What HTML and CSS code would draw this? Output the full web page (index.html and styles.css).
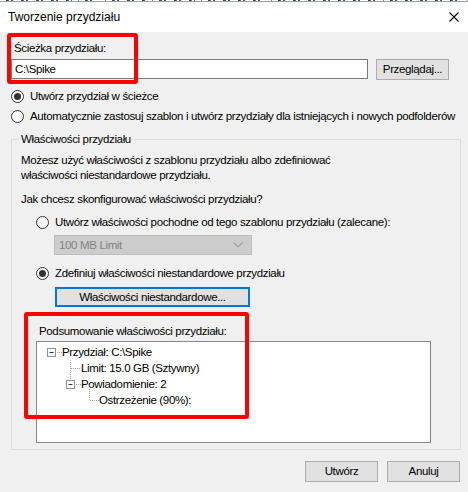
FILE: index.html
```html
<!DOCTYPE html>
<html lang="pl">
<head>
<meta charset="utf-8">
<title>Tworzenie przydziału</title>
<link rel="stylesheet" href="styles.css">
</head>
<body>
<div class="window">
  <div class="strip">
    <span class="c1"></span><span class="c2"></span><span class="c3"></span><span class="c4"></span><span class="c5"></span><span class="c6"></span><span class="c7"></span>
  </div>
  <div class="titlebar">
    <span class="title">Tworzenie przydziału</span>
    <svg class="close" width="10" height="10" viewBox="0 0 10 10"><path d="M0.5 0.5 L9.5 9.5 M9.5 0.5 L0.5 9.5" stroke="#000" stroke-width="1.1" fill="none"/></svg>
  </div>
  <div class="content">
    <div class="label path-label">Ścieżka przydziału:</div>
    <div class="path-row">
      <div class="input">C:\Spike</div>
      <div class="btn browse">Przeglądaj...</div>
    </div>
    <div class="radio-row first"><span class="radio checked"></span><span>Utwórz przydział w ścieżce</span></div>
    <div class="radio-row second"><span class="radio"></span><span>Automatycznie zastosuj szablon i utwórz przydziały dla istniejących i nowych podfolderów</span></div>

    <div class="group">
      <div class="legend">Właściwości przydziału</div>
      <div class="group-body">
        <p class="desc">Możesz użyć właściwości z szablonu przydziału albo zdefiniować<br>właściwości niestandardowe przydziału.</p>
        <p class="question">Jak chcesz skonfigurować właściwości przydziału?</p>
        <div class="radio-row inner r3"><span class="radio"></span><span>Utwórz właściwości pochodne od tego szablonu przydziału (zalecane):</span></div>
        <div class="combo"><span>100 MB Limit</span>
          <svg width="10" height="6" viewBox="0 0 10 6"><path d="M0.5 0.5 L5 5 L9.5 0.5" stroke="#a0a0a0" stroke-width="1.2" fill="none"/></svg>
        </div>
        <div class="radio-row inner r4"><span class="radio checked"></span><span>Zdefiniuj właściwości niestandardowe przydziału</span></div>
        <div class="btn custom">Właściwości niestandardowe...</div>
        <div class="summary-label">Podsumowanie właściwości przydziału:</div>
        <div class="tree">
          <svg class="tree-lines" width="70" height="70" viewBox="0 0 70 70">
            <g stroke="#a0a0a0" stroke-width="1" stroke-dasharray="1 1" fill="none">
              <path d="M20 10.5 H25"/>
              <path d="M33.5 18 V41"/>
              <path d="M34 26.5 H44"/>
              <path d="M39 42.5 H44"/>
              <path d="M52.5 47 V58"/>
              <path d="M53 58.5 H62"/>
            </g>
            <g>
              <rect x="10.5" y="6.5" width="8" height="8" fill="#fff" stroke="#919191"/>
              <path d="M12.5 10.5 H16.5" stroke="#333"/>
              <rect x="29.5" y="38.5" width="8" height="8" fill="#fff" stroke="#919191"/>
              <path d="M31.5 42.5 H35.5" stroke="#333"/>
            </g>
          </svg>
          <div class="node l0">Przydział: C:\Spike</div>
          <div class="node l1">Limit: 15.0 GB (Sztywny)</div>
          <div class="node l1">Powiadomienie: 2</div>
          <div class="node l2">Ostrzeżenie (90%):</div>
        </div>
      </div>
    </div>

    <div class="actions">
      <div class="btn action">Utwórz</div>
      <div class="btn action">Anuluj</div>
    </div>
  </div>
  <div class="mark mark1"></div>
  <div class="mark mark2"></div>
</div>
</body>
</html>
```
FILE: styles.css
```css
html, body {
  margin: 0;
  padding: 0;
}
body {
  width: 468px;
  height: 492px;
  overflow: hidden;
  background: #f0f0f0;
  font-family: "Liberation Sans", Arial, sans-serif;
  font-size: 11.5px;
  letter-spacing: -0.35px;
  color: #000;
}
.window {
  position: relative;
  width: 468px;
  height: 492px;
}
.strip {
  height: 2px;
  overflow: hidden;
  background: #fff;
  border-bottom: 1px solid #a0a0a0;
  display: flex;
  box-sizing: border-box;
}
.strip span {
  display: block;
  height: 1px;
  border-right: 1px solid #888;
  box-sizing: border-box;
  background: repeating-linear-gradient(90deg, transparent 0 6px, #444 6px 8px, #2a6db0 8px 9px, transparent 9px 11px, #555 11px 13px, transparent 13px 15px);
  background-clip: content-box;
  padding: 0 6px 0 4px;
}
.strip .c1 { width: 79px; }
.strip .c2 { width: 27px; }
.strip .c3 { width: 47px; }
.strip .c4 { width: 49px; }
.strip .c5 { width: 70px; }
.strip .c6 { width: 112px; }
.strip .c7 { width: 84px; }
.titlebar {
  height: 30px;
  background: #fff;
  display: flex;
  align-items: center;
  justify-content: space-between;
  padding: 0 9px 0 8px;
  box-sizing: border-box;
}
.title {
  font-size: 12px;
  letter-spacing: 0;
  line-height: 16px;
}
.close {
  display: block;
}
.content {
  padding: 8px 8px 0 11px;
}
.label {
  line-height: 16px;
}
.path-label {
  margin-left: 3px;
}
.path-row {
  display: flex;
  margin-top: 3px;
  gap: 8px;
}
.input {
  width: 357px;
  height: 20px;
  box-sizing: border-box;
  border: 1px solid #7a7a7a;
  background: #fff;
  padding-left: 3px;
  line-height: 18px;
}
.btn {
  box-sizing: border-box;
  border: 1px solid #adadad;
  background: #e1e1e1;
  text-align: center;
}
.browse {
  width: 73px;
  height: 21px;
  line-height: 19px;
}
.radio-row {
  display: flex;
  align-items: center;
  height: 16px;
  line-height: 16px;
  white-space: nowrap;
}
.radio-row.first {
  margin-top: 8px;
}
.radio-row.second {
  margin-top: 4px;
}
.radio {
  width: 13px;
  height: 13px;
  box-sizing: border-box;
  border: 1px solid #333;
  border-radius: 50%;
  background: #fff;
  margin-right: 6px;
  position: relative;
  flex: none;
}
.radio.checked::after {
  content: "";
  position: absolute;
  left: 2px;
  top: 2px;
  width: 7px;
  height: 7px;
  border-radius: 50%;
  background: #333;
}
.group {
  margin-top: 15px;
  width: 450px;
  height: 311px;
  box-sizing: border-box;
  border: 1px solid #dcdcdc;
  position: relative;
}
.legend {
  position: absolute;
  left: 6px;
  top: -9px;
  padding: 0 3px;
  background: #f0f0f0;
  line-height: 16px;
}
.group-body {
  padding: 13px 0 0 9px;
}
.desc {
  margin: 0;
  line-height: 15px;
}
.question {
  margin: 9px 0 0 0;
  line-height: 15px;
}
.radio-row.inner {
  margin-left: 15px;
}
.radio-row.r3 {
  margin-top: 7px;
}
.combo {
  margin: 5px 0 0 33px;
  width: 198px;
  height: 20px;
  box-sizing: border-box;
  border: 1px solid #bfbfbf;
  background: #cccccc;
  color: #838383;
  display: flex;
  align-items: center;
  justify-content: space-between;
  padding: 0 8px 0 4px;
}
.radio-row.r4 {
  margin-top: 10px;
}
.custom {
  margin: 6px 0 0 34px;
  width: 195px;
  height: 20px;
  border: 2px solid #0078d7;
  line-height: 16px;
}
.summary-label {
  margin: 16px 0 0 18px;
  line-height: 16px;
}
.tree {
  position: relative;
  margin: 2px 0 0 15px;
  width: 395px;
  height: 102px;
  box-sizing: border-box;
  border: 1px solid #828790;
  background: #fff;
  padding-top: 2px;
}
.tree-lines {
  position: absolute;
  left: 0;
  top: 0;
}
.node {
  line-height: 16px;
  white-space: nowrap;
}
.node.l0 { padding-left: 25px; }
.node.l1 { padding-left: 44px; }
.node.l2 { padding-left: 62px; }
.actions {
  display: flex;
  justify-content: flex-end;
  gap: 9px;
  margin-top: 11px;
  width: 449px;
}
.action {
  width: 73px;
  height: 21px;
  line-height: 19px;
}
.mark {
  position: absolute;
  border: 4px solid #ff0000;
  border-radius: 3px;
  box-sizing: border-box;
}
.mark1 {
  left: 7px;
  top: 33px;
  width: 131px;
  height: 51px;
}
.mark2 {
  left: 24px;
  top: 312px;
  width: 225px;
  height: 107px;
}
```
